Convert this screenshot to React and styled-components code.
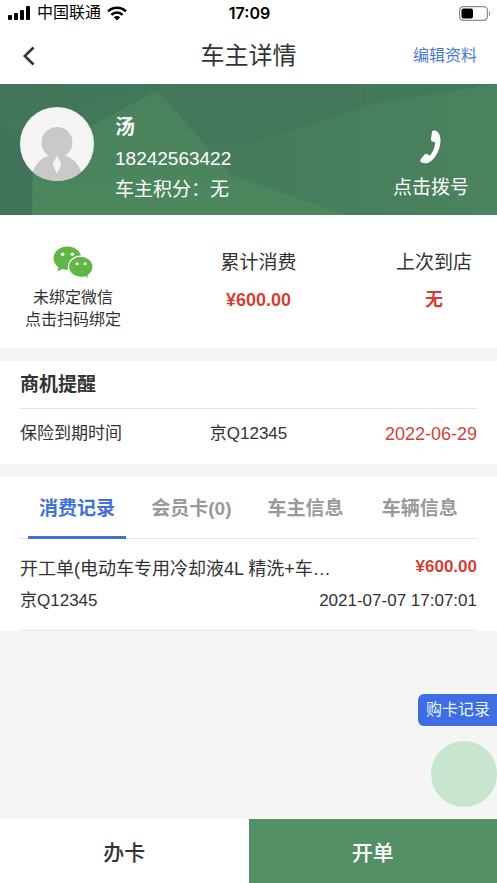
import React, { useState } from "react";
import styled, { createGlobalStyle } from "styled-components";

const tabs = ["消费记录", "会员卡(0)", "车主信息", "车辆信息"];

const SignalIcon = () => (
  <svg width="23" height="14" viewBox="0 0 23 14" aria-hidden="true">
    <rect x="0" y="9" width="4" height="5" rx="1" />
    <rect x="6" y="7" width="4" height="7" rx="1" />
    <rect x="12" y="4" width="4" height="10" rx="1" />
    <rect x="18" y="0" width="4" height="14" rx="1" />
  </svg>
);

const WifiIcon = () => (
  <svg width="20" height="15" viewBox="0 0 20 15" aria-hidden="true">
    <g fill="none" stroke="#000" strokeWidth="2.6">
      <path d="M1.1 5.4a12.6 12.6 0 0 1 17.8 0" />
      <path d="M4.4 8.9a7.9 7.9 0 0 1 11.2 0" />
    </g>
    <path d="M10 14.6l-3.2-3.3a4.6 4.6 0 0 1 6.4 0z" />
  </svg>
);

const BatteryIcon = () => (
  <svg width="32" height="15" viewBox="0 0 32 15" aria-hidden="true">
    <rect x="0.6" y="0.6" width="27.8" height="13.8" rx="4" fill="none" stroke="#8c8c8c" strokeWidth="1.2" />
    <rect x="2.5" y="2.5" width="11.5" height="10" rx="2" />
    <path d="M30 5c1.6.6 1.6 4.4 0 5z" fill="#8c8c8c" />
  </svg>
);

const BackIcon = () => (
  <svg width="12" height="20" viewBox="0 0 12 20" aria-hidden="true">
    <path d="M10.5 1.5L1.8 10l8.700 8.500" fill="none" stroke="#333" strokeWidth="2.6" />
  </svg>
);

const AvatarIcon = () => (
  <svg width="74" height="74" viewBox="0 0 74 74" aria-hidden="true">
    <clipPath id="avatar-clip">
      <circle cx="37" cy="37" r="37" />
    </clipPath>
    <g clipPath="url(#avatar-clip)">
      <rect width="74" height="74" fill="#f5f5f5" />
      <circle cx="37" cy="35.500" r="15.500" fill="#c9c9c9" />
      <path d="M11 74c1-14 8-22 17-25l3-3h12l3 3c9 3 16 11 17 25z" fill="#c9c9c9" />
      <path d="M37 48.500c1 3 4 6 4 9s-3 6-4 9c-1-3-4-6-4-9s3-6 4-9z" fill="#f5f5f5" />
    </g>
  </svg>
);

const PhoneIcon = () => (
  <svg width="21" height="34" viewBox="0 0 21 34" aria-hidden="true">
    <path
      d="M12 1.700C12.300.7 13.300.300 14.600.4c3.600.3 5.700 4.600 5.900 9.100.3 8.300-4.200 18-10.500 22.300-3.100 2.100-6.500 1.900-8.700.4-1.300-.9-1.300-2.200-.4-3.300l3.600-4.300c.9-1.100 2.200-1.200 3.200-.4l1.900 1.500c3.200-3 5.400-8.500 5.600-13.200l-2.700-.9c-1.100-.4-1.700-1.300-1.500-2.500z"
      fill="#fff"
    />
  </svg>
);

const WechatIcon = () => (
  <svg width="40" height="33" viewBox="0 0 40 33" aria-hidden="true">
    <g fill="#61b745">
      <path d="M14.5.5C6.7.5.5 5.700.5 12.300c0 3.700 1.900 6.900 5 9.100L4.300 25.600l5-2.600c1.700.5 3.400.7 5.200.7 7.800 0 13.800-5 13.800-11.500S22.300.5 14.500.5z" />
      <path
        d="M27.800 10.200c-6.800 0-12.300 4.700-12.300 10.600s5.500 10.600 12.300 10.600c1.500 0 2.900-.2 4.200-.6l4.200 2.200-1.200-3.600c3.100-2 5-5.100 5-8.600 0-5.900-5.400-10.600-12.200-10.600z"
        stroke="#fff"
        strokeWidth="1.2"
      />
    </g>
    <g fill="#fff">
      <circle cx="9.700" cy="8.300" r="1.800" />
      <circle cx="19.300" cy="8.300" r="1.800" />
      <circle cx="24" cy="17.800" r="1.500" />
      <circle cx="32" cy="17.800" r="1.500" />
    </g>
  </svg>
);

const Facets = () => (
  <FacetArt viewBox="0 0 497 131" preserveAspectRatio="none" aria-hidden="true">
    <defs>
      <linearGradient id="facet-left" x1="0" y1="0" x2="1" y2="1">
        <stop offset="0" stopColor="#41745a" />
        <stop offset="1" stopColor="#4a835d" />
      </linearGradient>
      <linearGradient id="facet-light" x1="0" y1="0" x2="0" y2="1">
        <stop offset="0" stopColor="#49815c" />
        <stop offset="1" stopColor="#4c875e" />
      </linearGradient>
      <linearGradient id="facet-right" x1="0" y1="0" x2="1" y2="0">
        <stop offset="0" stopColor="#44785a" />
        <stop offset="1" stopColor="#4a835e" />
      </linearGradient>
    </defs>
    <rect width="497" height="131" fill="url(#facet-left)" />
    <path d="M0 38l34 30-2 63H0z" fill="#41735b" />
    <path d="M158 6L84 46 33 80l-1 51h313L230 91z" fill="url(#facet-light)" />
    <path d="M158 6V0h339v131H345L230 91z" fill="url(#facet-right)" />
    <path d="M158 0h207v22l-120 39-37 0-50-55z" fill="#43765a" />
    <path d="M365 0h132L365 22z" fill="#447a5b" />
  </FacetArt>
);

const App = () => {
  const [activeTab, setActiveTab] = useState(tabs[0]);

  return (
    <>
      <GlobalStyle />
      <Page>
        <StatusBar>
          <Carrier>
            <SignalIcon />
            <span>中国联通</span>
            <WifiIcon />
          </Carrier>
          <Clock>17:09</Clock>
          <BatteryIcon />
        </StatusBar>

        <Header>
          <BackButton type="button" aria-label="返回">
            <BackIcon />
          </BackButton>
          <h1>车主详情</h1>
          <EditLink href="#edit">编辑资料</EditLink>
        </Header>

        <main>
          <Hero>
            <Facets />
            <AvatarIcon />
            <Owner>
              <h2>汤</h2>
              <p>18242563422</p>
              <p>车主积分：无</p>
            </Owner>
            <CallLink href="tel:18242563422">
              <PhoneIcon />
              点击拨号
            </CallLink>
          </Hero>

          <Stats>
            <BindButton type="button">
              <WechatIcon />
              <span>
                未绑定微信
                <br />
                点击扫码绑定
              </span>
            </BindButton>
            <Stat>
              <p>累计消费</p>
              <strong>¥600.00</strong>
            </Stat>
            <Stat>
              <p>上次到店</p>
              <strong>无</strong>
            </Stat>
          </Stats>

          <Panel>
            <PanelTitle>商机提醒</PanelTitle>
            <Reminder>
              <span>保险到期时间</span>
              <span>京Q12345</span>
              <time dateTime="2022-06-29">2022-06-29</time>
            </Reminder>
          </Panel>

          <Panel>
            <TabList role="tablist">
              {tabs.map((tab) => (
                <Tab
                  key={tab}
                  type="button"
                  role="tab"
                  aria-selected={tab === activeTab}
                  $active={tab === activeTab}
                  onClick={() => setActiveTab(tab)}
                >
                  {tab}
                </Tab>
              ))}
            </TabList>
            <Record>
              <RecordLine>
                <RecordTitle>开工单(电动车专用冷却液4L 精洗+车…</RecordTitle>
                <Amount>¥600.00</Amount>
              </RecordLine>
              <RecordLine>
                <span>京Q12345</span>
                <time dateTime="2021-07-07T17:07:01">2021-07-07 17:07:01</time>
              </RecordLine>
            </Record>
          </Panel>
        </main>

        <Footer>
          <FooterButton type="button">办卡</FooterButton>
          <FooterButton type="button" $primary>
            开单
          </FooterButton>
          <Floating>
            <CardRecords type="button">购卡记录</CardRecords>
            <FloatingBall type="button" aria-label="快捷菜单" />
          </Floating>
        </Footer>
      </Page>
    </>
  );
};

export default App;

const GlobalStyle = createGlobalStyle`
  * {
    box-sizing: border-box;
  }

  body {
    margin: 0;
    background: #f5f5f5;
    color: #333;
    font-family: "Liberation Sans", "Noto Sans CJK SC", sans-serif;
    font-size: 17px;
    line-height: 24px;
  }

  h1, h2, p {
    margin: 0;
  }

  button {
    border: 0;
    padding: 0;
    background: none;
    color: inherit;
    font: inherit;
    cursor: pointer;
  }

  a {
    text-decoration: none;
  }

  svg {
    display: block;
    flex-shrink: 0;
  }
`;

const Page = styled.div`
  min-height: 100vh;
  display: flex;
  flex-direction: column;

  main {
    flex: 1;
  }
`;

const StatusBar = styled.div`
  display: grid;
  grid-template-columns: 1fr auto 1fr;
  align-items: center;
  height: 26px;
  padding: 0 6px 0 8px;
  background: #fff;
  color: #000;

  > svg {
    justify-self: end;
  }
`;

const Carrier = styled.div`
  display: flex;
  align-items: center;
  gap: 6px;
  font-size: 16px;
`;

const Clock = styled.time`
  font-family: Inter, sans-serif;
  font-size: 16px;
  font-weight: 600;
`;

const Header = styled.header`
  display: grid;
  grid-template-columns: 1fr auto 1fr;
  align-items: center;
  height: 58px;
  padding: 2px 20px 0;
  background: #fff;

  h1 {
    font-size: 24px;
    font-weight: 400;
    line-height: 32px;
  }
`;

const BackButton = styled.button`
  justify-self: start;
  padding: 3px;
`;

const EditLink = styled.a`
  justify-self: end;
  color: #4a7bd0;
  font-size: 16px;
`;

const Hero = styled.section`
  position: relative;
  display: flex;
  align-items: flex-start;
  padding: 23px 28px 10px 20px;
  color: #fff;

  > svg {
    position: relative;
  }
`;

const FacetArt = styled.svg`
  && {
    position: absolute;
    inset: 0;
    width: 100%;
    height: 100%;
  }
`;

const Owner = styled.div`
  position: relative;
  flex: 1;
  padding: 5px 0 0 21px;
  font-size: 19px;
  line-height: 31px;

  h2 {
    font-size: 20px;
    font-weight: 700;
  }
`;

const CallLink = styled.a`
  position: relative;
  display: flex;
  flex-direction: column;
  align-items: center;
  gap: 12px;
  padding-top: 23px;
  color: #fff;
  font-size: 19px;
`;

const Stats = styled.section`
  display: flex;
  justify-content: space-between;
  align-items: flex-start;
  padding: 31px 25px 17px;
  background: #fff;
`;

const BindButton = styled.button`
  display: flex;
  flex-direction: column;
  align-items: center;
  gap: 8px;
  font-size: 16px;
  line-height: 22px;
`;

const Stat = styled.div`
  padding-top: 5px;
  font-size: 19px;
  text-align: center;

  strong {
    display: block;
    padding-top: 13px;
    color: #d33f35;
    font-size: 18px;
  }
`;

const Panel = styled.section`
  margin-top: 13px;
  padding: 0 20px;
  background: #fff;
`;

const PanelTitle = styled.h2`
  padding: 12px 0 11px;
  border-bottom: 1px solid #e6e6e6;
  font-size: 19px;
`;

const Reminder = styled.div`
  display: grid;
  grid-template-columns: 1fr auto 1fr;
  padding: 13px 0 18px;

  time {
    justify-self: end;
    color: #d33f35;
    font-size: 18px;
  }
`;

const TabList = styled.div`
  display: grid;
  grid-template-columns: repeat(4, 1fr);
  border-bottom: 1px solid #e6e6e6;
`;

const Tab = styled.button`
  margin: 0 8px -1px;
  padding: 20px 0 15px;
  border-bottom: 3px solid ${({ $active }) => ($active ? "#4270d8" : "transparent")};
  color: ${({ $active }) => ($active ? "#4270d8" : "#999")};
  font-size: 19px;
  font-weight: 700;
  white-space: nowrap;
`;

const Record = styled.article`
  padding: 14px 0 13px;
  border-bottom: 1px solid #e6e6e6;
`;

const RecordLine = styled.div`
  display: flex;
  justify-content: space-between;
  line-height: 32px;
`;

const RecordTitle = styled.span`
  font-size: 18px;
`;

const Amount = styled.strong`
  color: #d33f35;
  font-size: 17px;
  line-height: 28px;
`;

const Footer = styled.footer`
  position: sticky;
  bottom: 0;
  display: grid;
  grid-template-columns: 1fr 1fr;
`;

const FooterButton = styled.button`
  padding: 22px 0 18px;
  background: ${({ $primary }) => ($primary ? "#549065" : "#fff")};
  color: ${({ $primary }) => ($primary ? "#fff" : "#333")};
  font-size: 21px;
  font-weight: 500;
`;

const Floating = styled.div`
  position: absolute;
  right: 0;
  bottom: 100%;
  display: flex;
  flex-direction: column;
  align-items: flex-end;
  gap: 15px;
  padding-bottom: 12px;
`;

const CardRecords = styled.button`
  padding: 4px 7px 4px 8px;
  border-radius: 6px 0 0 6px;
  background: #3e6de4;
  color: #e9f5ee;
  font-size: 16px;
`;

const FloatingBall = styled.button`
  width: 66px;
  height: 66px;
  border-radius: 50%;
  background: #c7e4cf;
`;
